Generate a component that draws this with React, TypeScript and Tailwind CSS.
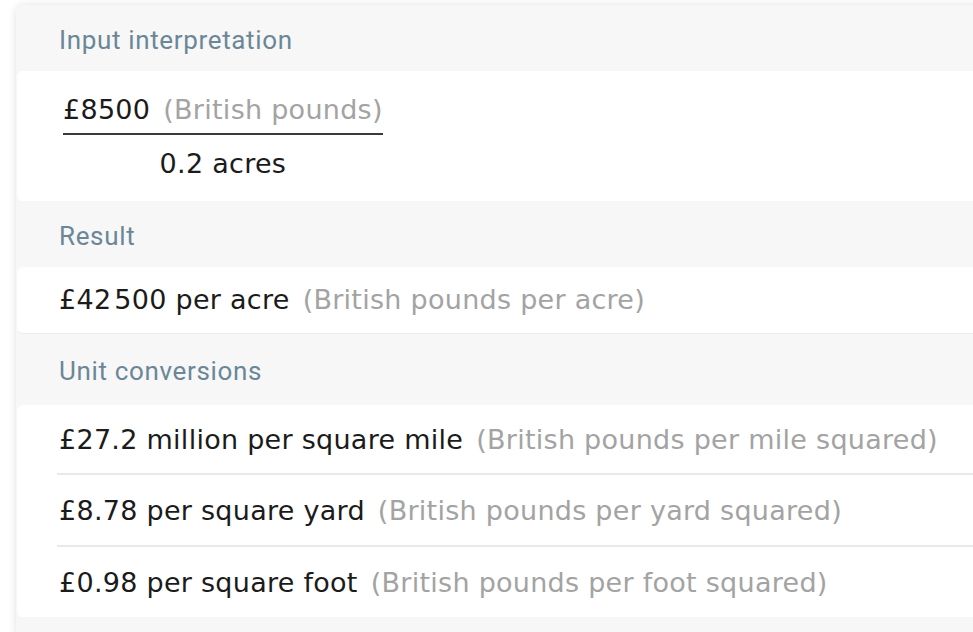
const header = "flex items-center pl-[43px] pt-[4px] text-[26px] tracking-[0.025em] text-[#6b8797] font-['Roboto',sans-serif]"
const body = "font-['DejaVu_Sans',sans-serif] text-[27px] tracking-[0.01em]"

function Unit({ value, unit, note }: { value: string; unit?: string; note: string }) {
  return (
    <span className="whitespace-nowrap">
      <span className="text-[#1b1b1b]">{value}</span>
      {unit && <span className="text-[#1b1b1b]"> {unit}</span>}
      <span className="ml-[13px] text-[#a3a3a3]">({note})</span>
    </span>
  )
}

export default function App() {
  const conversions = [
    { value: '£27.2', unit: 'million per square mile', note: 'British pounds per mile squared', h: 'h-[70px]' },
    { value: '£8.78', unit: 'per square yard', note: 'British pounds per yard squared', h: 'h-[72px]' },
    { value: '£0.98', unit: 'per square foot', note: 'British pounds per foot squared', h: 'h-[70px]' },
  ]

  return (
    <div className="w-[973px] h-[632px] overflow-hidden bg-white pl-4 pt-[5px]">
      <div className="w-[1000px] rounded-lg bg-[#f7f7f7] shadow-[0_0_8px_rgba(0,0,0,0.12)] pb-6">
        {/* Input interpretation */}
        <div className={`${header} h-[66px]`}>Input interpretation</div>
        <div className={`ml-px h-[130px] rounded-l-md bg-white pl-[46px] pt-[19px] ${body}`}>
          <div className="inline-flex flex-col items-stretch">
            <div className="pb-[7px] border-b-2 border-[#3a3a3a] leading-[32px]">
              <Unit value="£8500" note="British pounds" />
            </div>
            <div className="text-center text-[#1b1b1b] leading-[32px] pt-[13px]">0.2 acres</div>
          </div>
        </div>

        {/* Result */}
        <div className={`${header} h-[66px]`}>Result</div>
        <div className={`ml-px h-[67px] rounded-l-md bg-white pl-[42px] flex items-center border-b border-[#ececec] ${body}`}>
          <Unit value={'£42\u200A500'} unit="per acre" note="British pounds per acre" />
        </div>

        {/* Unit conversions */}
        <div className={`${header} h-[71px]`}>Unit conversions</div>
        <div className={`ml-px rounded-l-md bg-white pl-10 ${body}`}>
          {conversions.map((c, i) => (
            <div
              key={c.value}
              className={`${c.h} flex items-center pl-[2px] pt-[3px] ${i < conversions.length - 1 ? 'border-b-2 border-[#e9e9e9]' : ''}`}
            >
              <Unit value={c.value} unit={c.unit} note={c.note} />
            </div>
          ))}
        </div>
      </div>
    </div>
  )
}
